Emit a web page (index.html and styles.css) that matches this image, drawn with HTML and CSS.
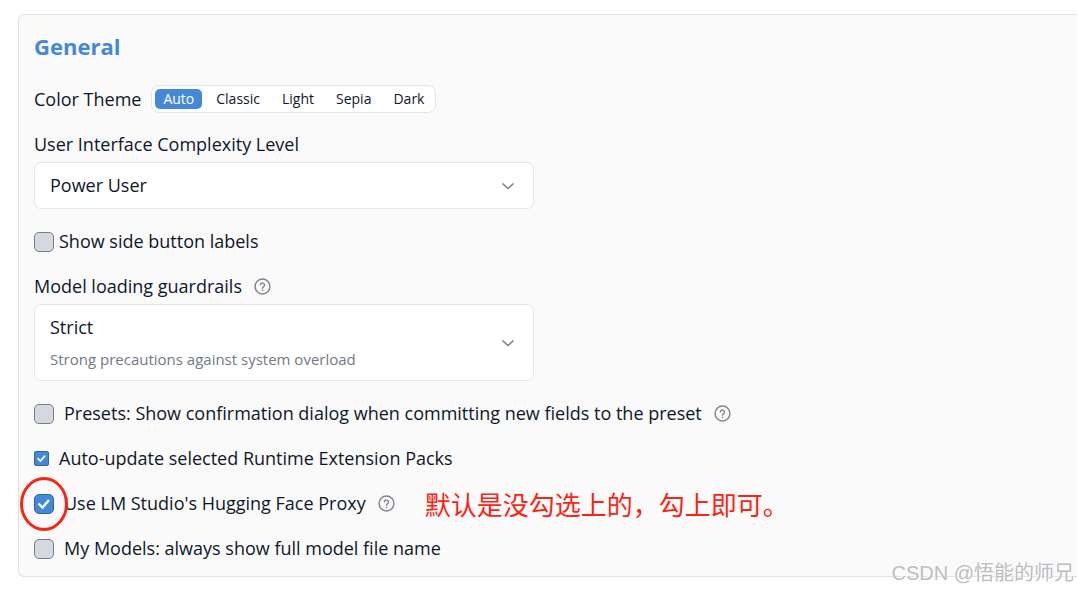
FILE: index.html
```html
<!DOCTYPE html>
<html lang="en">
<head>
<meta charset="utf-8">
<title>Settings</title>
<link rel="stylesheet" href="styles.css">
</head>
<body>
<svg class="defs" aria-hidden="true">
  <symbol id="help" viewBox="0 0 24 24"><circle cx="12" cy="12" r="10.5"/><path d="M9 9.4a3 3 0 0 1 5.9.9c0 2-2.9 2.4-2.9 4"/><path d="M12 17.4v.3"/></symbol>
  <symbol id="chevron" viewBox="0 0 14 14"><path d="M1.5 4.5l5.5 5 5.5-5"/></symbol>
</svg>
<main class="panel">
  <h1 class="title">General</h1>

  <div class="row theme">
    <span id="theme-label">Color Theme</span>
    <div class="segmented" role="group" aria-labelledby="theme-label">
      <button class="segment active" type="button" aria-pressed="true">Auto</button>
      <button class="segment" type="button" aria-pressed="false">Classic</button>
      <button class="segment" type="button" aria-pressed="false">Light</button>
      <button class="segment" type="button" aria-pressed="false">Sepia</button>
      <button class="segment" type="button" aria-pressed="false">Dark</button>
    </div>
  </div>

  <div class="field">
    <label for="level">User Interface Complexity Level</label>
    <div class="picker">
      <select class="select" id="level"><option>Power User</option></select>
      <svg class="chevron" aria-hidden="true"><use href="#chevron"/></svg>
    </div>
  </div>

  <div class="row tight">
    <input class="check" type="checkbox" id="labels">
    <label for="labels">Show side button labels</label>
  </div>

  <div class="field">
    <div class="row">
      <label for="guard">Model loading guardrails</label>
      <svg class="help" aria-hidden="true"><use href="#help"/></svg>
    </div>
    <div class="picker">
      <select class="select detailed" id="guard" aria-describedby="guard-note"><option>Strict</option></select>
      <span class="note" id="guard-note">Strong precautions against system overload</span>
      <svg class="chevron" aria-hidden="true"><use href="#chevron"/></svg>
    </div>
  </div>

  <div class="row">
    <input class="check" type="checkbox" id="presets">
    <label for="presets">Presets: Show confirmation dialog when committing new fields to the preset</label>
    <svg class="help" aria-hidden="true"><use href="#help"/></svg>
  </div>
  <div class="row">
    <input class="check small" type="checkbox" id="update" checked>
    <label for="update">Auto-update selected Runtime Extension Packs</label>
  </div>
  <div class="row">
    <span class="marked">
      <input class="check" type="checkbox" id="proxy" checked>
      <span class="ring"></span>
    </span>
    <label for="proxy">Use LM Studio's Hugging Face Proxy</label>
    <svg class="help" aria-hidden="true"><use href="#help"/></svg>
    <span class="remark" lang="zh">默认是没勾选上的，勾上即可。</span>
  </div>
  <div class="row">
    <input class="check" type="checkbox" id="names">
    <label for="names">My Models: always show full model file name</label>
  </div>
</main>
<div class="watermark" lang="zh">CSDN @悟能的师兄</div>
</body>
</html>
```
FILE: styles.css
```css
* { box-sizing: border-box; }

body {
  margin: 0;
  padding: 14px 0 13px 18px;
  overflow-x: hidden;
  background: #fff;
  color: #0f172a;
  font: 18px/27px "Open Sans", "Noto Sans", sans-serif;
}

.defs { position: absolute; width: 0; height: 0; }

.panel {
  display: flex;
  flex-direction: column;
  gap: 18px;
  padding: 18px 15px 14px;
  border: 1px solid #e2e2e4;
  border-right: 0;
  border-radius: 6px 0 0 6px;
  background: #fafafa;
}

.title {
  margin: 0 0 7px;
  color: #4688d8;
  font-size: 22px;
  line-height: 27px;
  font-weight: 700;
}

.row { display: flex; align-items: center; gap: 10px; white-space: nowrap; }
.row.tight { gap: 5px; }
.theme { min-height: 28px; }

.segmented {
  display: flex;
  gap: 6px;
  padding: 3px;
  border: 1px solid #e5e5e7;
  border-radius: 8px;
  background: #fff;
}

.segment {
  padding: 0 8px;
  border: 0;
  border-radius: 5px;
  background: none;
  color: #0f172a;
  font: 14px/20px "Open Sans", "Noto Sans", sans-serif;
}
.segment.active { background: #4688d8; color: #fff; }

.field {
  display: flex;
  flex-direction: column;
  gap: 4px;
  margin-bottom: 1px;
}

.picker { position: relative; max-width: 500px; }

.select {
  display: block;
  width: 100%;
  height: 47px;
  padding: 0 15px;
  border: 1px solid #e2e8f0;
  border-radius: 7px;
  appearance: none;
  background: #fff;
  color: #0f172a;
  font: inherit;
}
.select.detailed { height: 77px; padding-bottom: 31px; }

.note {
  position: absolute;
  left: 16px;
  bottom: 8px;
  color: #737985;
  font-size: 15px;
  pointer-events: none;
}

.chevron {
  position: absolute;
  top: calc(50% - 7px);
  right: 19px;
  width: 14px;
  height: 14px;
  fill: none;
  stroke: #777c87;
  stroke-width: 1.5;
  pointer-events: none;
}

.help {
  flex: none;
  width: 17px;
  height: 17px;
  margin-left: 2px;
  fill: none;
  stroke: #80848d;
  stroke-width: 2;
  stroke-linecap: round;
}

.check {
  flex: none;
  width: 20px;
  height: 20px;
  margin: 0;
  border: 1px solid #777d8b;
  border-radius: 5px;
  appearance: none;
  background: #d5d8df;
}
.check:checked {
  border-color: #35649e;
  background: #4688d8 url("data:image/svg+xml,%3Csvg xmlns='http://www.w3.org/2000/svg' viewBox='0 0 18 18'%3E%3Cpath d='M3.5 8.5l4 4 6.5-7.5' fill='none' stroke='white' stroke-width='2.4'/%3E%3C/svg%3E") center / 100% no-repeat;
}
.check.small { width: 15px; height: 15px; border-radius: 2px; }

.marked { position: relative; display: flex; }
.ring {
  position: absolute;
  inset: -17px -14px;
  border: 3px solid #fb2414;
  border-radius: 50%;
  pointer-events: none;
}

.remark {
  margin-left: 20px;
  color: #fb2414;
  font-family: "Noto Sans CJK SC", sans-serif;
  font-size: 26px;
  font-weight: 400;
}

.watermark {
  position: absolute;
  right: 3px;
  bottom: 3px;
  color: #bdbdbf;
  font: 20px/28px "Liberation Sans", "Noto Sans CJK SC", sans-serif;
  text-shadow: -1px -1px 0 #fff;
}
```
